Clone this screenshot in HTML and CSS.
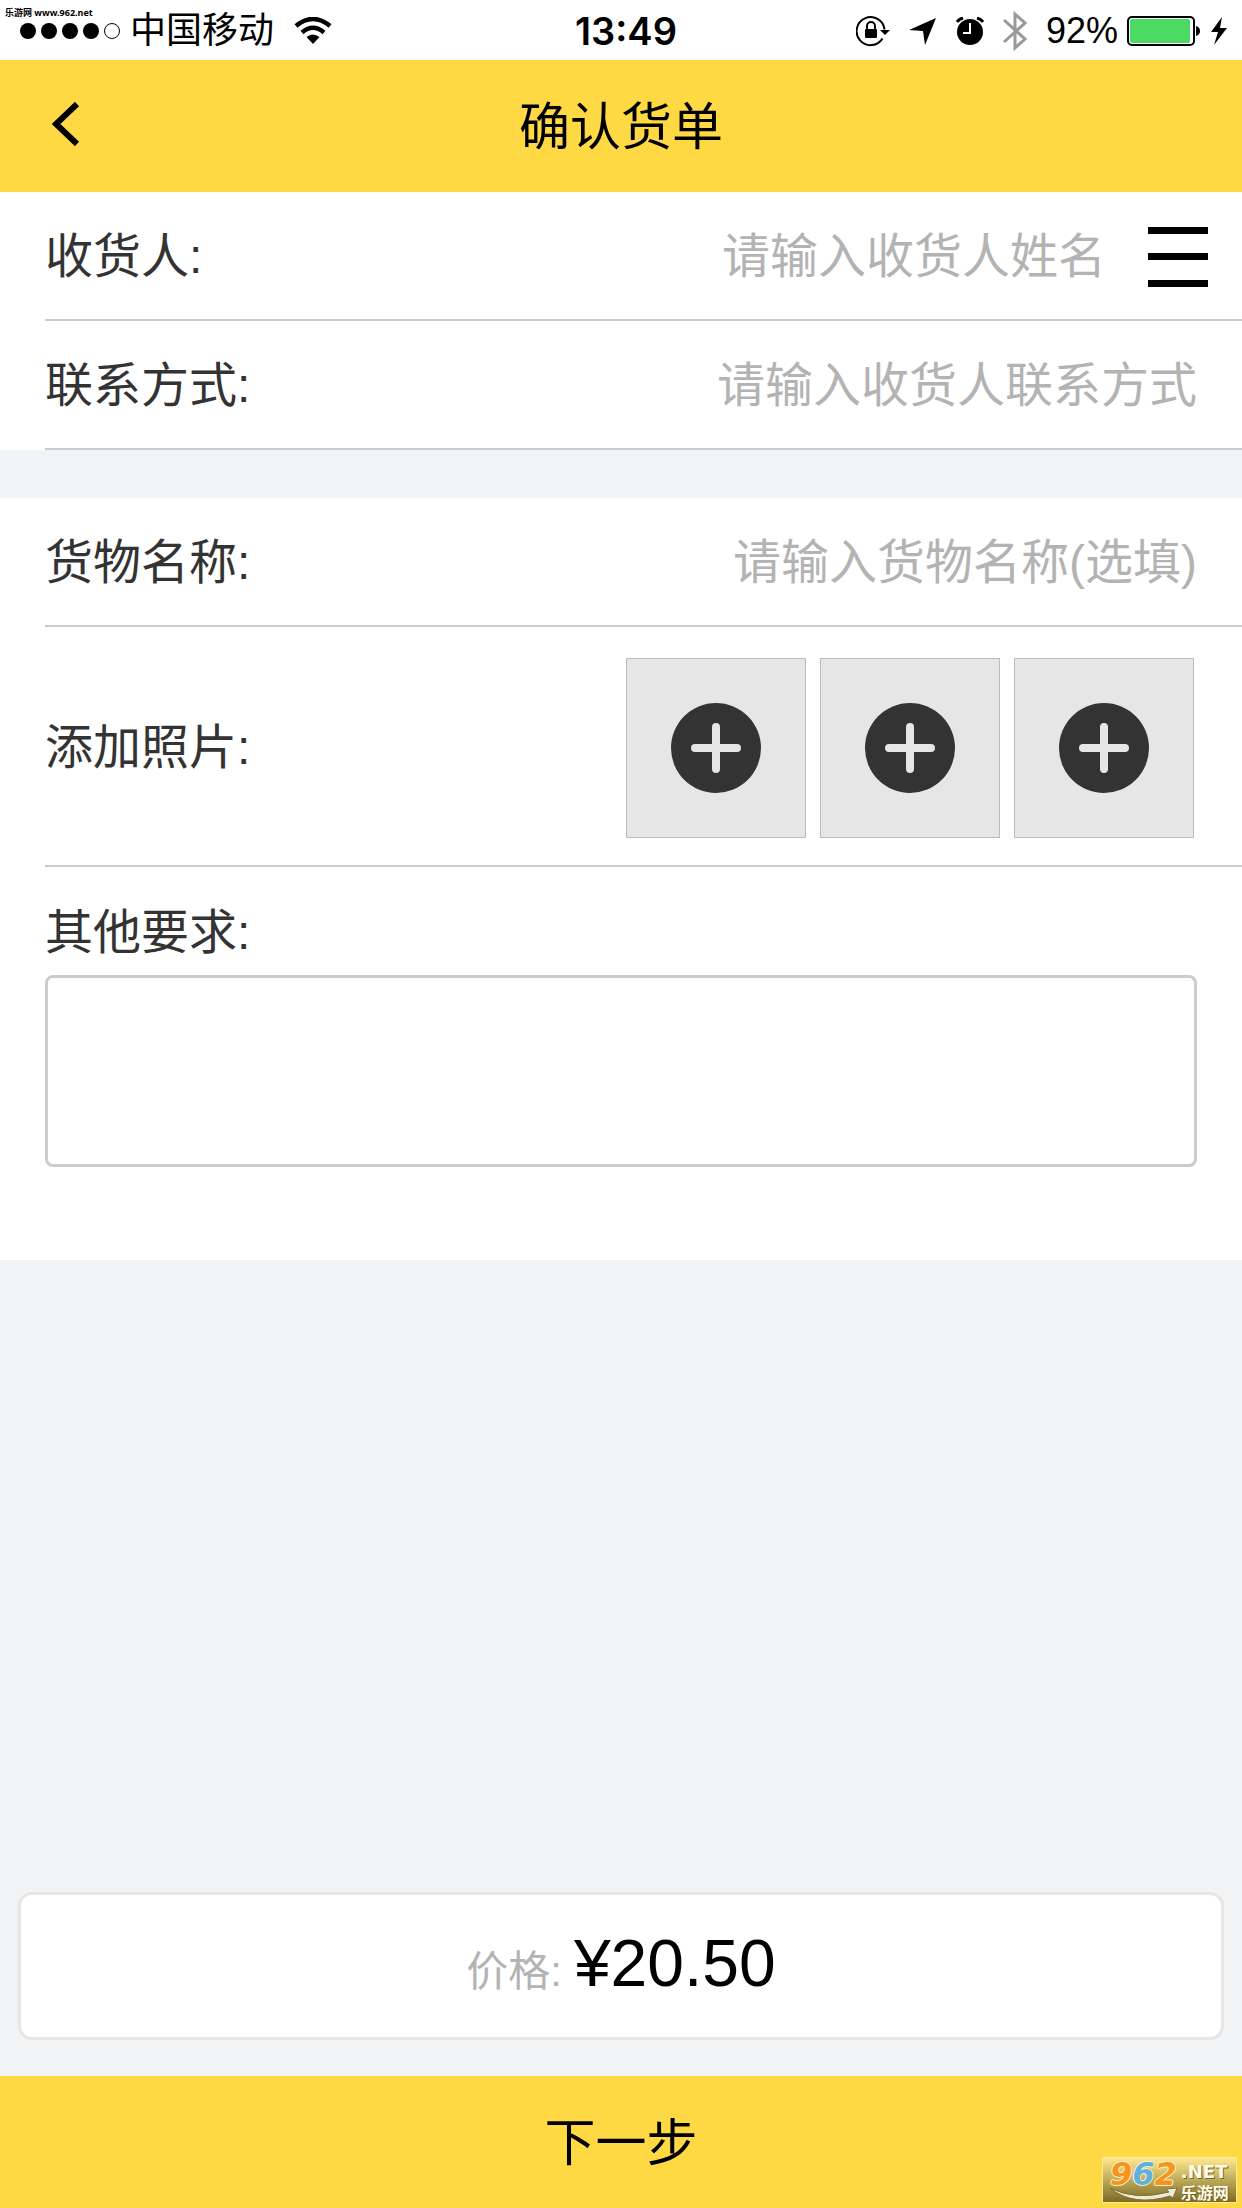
FILE: index.html
```html
<!DOCTYPE html>
<html lang="zh-CN">

<head>
	<meta charset="utf-8" />
	<meta name="viewport" content="width=device-width" />
	<title>确认货单</title>
	<link rel="stylesheet" href="styles.css">
</head>

<body>
	<div class="status">
		<div class="status-left">
			<svg class="signal" width="100" height="16" viewBox="0 0 100 16">
				<circle cx="8" cy="8" r="8" />
				<circle cx="29" cy="8" r="8" />
				<circle cx="50" cy="8" r="8" />
				<circle cx="71" cy="8" r="8" />
				<circle cx="92" cy="8" r="7.5" fill="none" stroke="#000" />
			</svg>
			<span class="carrier">中国移动</span>
			<svg class="wifi" width="38" height="28" viewBox="0 0 38 28">
				<path d="M2 9Q19-5 36 9M8 15.500Q19 6 30 15.500" fill="none" stroke="#000" stroke-width="4.500" />
				<path d="M12.500 20Q19 15 25.500 20L19 27Z" />
			</svg>
		</div>
		<time class="clock">13:49</time>
		<div class="status-right">
			<svg width="34" height="32" viewBox="0 0 34 32">
				<path d="M28.500 14.500A14 14 0 1 0 26.500 23.500" fill="none" stroke="#000" stroke-width="2" />
				<path d="M24 15H34L29 20Z" />
				<rect x="9" y="14" width="12" height="9" rx="1" />
				<path d="M11 15V11A4 4 0 0 1 19 11V15" fill="none" stroke="#000" stroke-width="2" />
			</svg>
			<svg width="28" height="28" viewBox="0 0 28 28">
				<path d="M27 1L16 28L14 14L0 13Z" />
			</svg>
			<svg width="28" height="28" viewBox="0 0 28 28">
				<circle cx="14" cy="15" r="13" />
				<path d="M1 5Q3 2 7 1M27 5Q25 2 21 1" fill="none" stroke="#000" stroke-width="3" />
				<path d="M14 6V16H7" fill="none" stroke="#fff" stroke-width="2" />
			</svg>
			<svg width="24" height="42" viewBox="0 0 24 42">
				<path d="M1 10L22 29L12 38V4L22 13L1 32" fill="none" stroke="#999" stroke-width="3" />
			</svg>
			<div class="battery">
				<span>92%</span>
				<svg width="74" height="30" viewBox="0 0 74 30">
					<rect x="1" y="1" width="66" height="28" rx="4" fill="#fff" stroke="#000" stroke-width="2" />
					<rect x="3" y="3" width="60" height="24" rx="2" fill="#4cd964" />
					<path d="M69 10Q73 11 73 15Q73 19 69 20Z" />
				</svg>
				<svg width="22" height="30" viewBox="0 0 22 30">
					<path d="M12 1L1 16H8L4 29L17 12H10Z" />
				</svg>
			</div>
		</div>
	</div>
	<div class="site-mark">乐游网 www.962.net</div>

	<header class="header">
		<button type="button" class="back" aria-label="返回">
			<svg width="28" height="44" viewBox="0 0 28 44">
				<path d="M25 2L4 22L25 42" fill="none" stroke="#000" stroke-width="6" />
			</svg>
		</button>
		<h1>确认货单</h1>
	</header>

	<form class="order">
		<section class="group">
			<div class="row with-menu">
				<label for="receiver">收货人:</label>
				<input type="text" id="receiver" placeholder="请输入收货人姓名" />
				<button type="button" class="menu" aria-label="选择收货人">
					<svg width="60" height="60" viewBox="0 0 60 60">
						<path d="M0 0H60V7H0ZM0 26H60V33H0ZM0 53H60V60H0Z" />
					</svg>
				</button>
			</div>
			<div class="row">
				<label for="contact">联系方式:</label>
				<input type="text" id="contact" placeholder="请输入收货人联系方式" />
			</div>
		</section>

		<section class="group">
			<div class="row">
				<label for="goods">货物名称:</label>
				<input type="text" id="goods" placeholder="请输入货物名称(选填)" />
			</div>
			<div class="row photos">
				<span class="photos-label">添加照片:</span>
				<button type="button" class="photo" aria-label="添加照片 1">
					<svg width="90" height="90" viewBox="0 0 90 90">
						<circle cx="45" cy="45" r="45" fill="#333" />
						<path d="M45 24V66M24 45H66" stroke="#e6e6e6" stroke-width="8" stroke-linecap="round" />
					</svg>
				</button>
				<button type="button" class="photo" aria-label="添加照片 2">
					<svg width="90" height="90" viewBox="0 0 90 90">
						<circle cx="45" cy="45" r="45" fill="#333" />
						<path d="M45 24V66M24 45H66" stroke="#e6e6e6" stroke-width="8" stroke-linecap="round" />
					</svg>
				</button>
				<button type="button" class="photo" aria-label="添加照片 3">
					<svg width="90" height="90" viewBox="0 0 90 90">
						<circle cx="45" cy="45" r="45" fill="#333" />
						<path d="M45 24V66M24 45H66" stroke="#e6e6e6" stroke-width="8" stroke-linecap="round" />
					</svg>
				</button>
			</div>
			<div class="remark">
				<label for="remark">其他要求:</label>
				<textarea id="remark"></textarea>
			</div>
		</section>

		<div class="price">
			<span class="price-label">价格:</span>
			<span class="price-value">¥20.50</span>
		</div>
		<button type="button" class="next">下一步</button>
	</form>

	<div class="logo">
		<svg class="swoosh" width="70" height="14" viewBox="0 0 70 14">
			<path d="M1 1Q26 14 60 5L57 2L68 1L64 11L61 9Q24 20 1 1Z" fill="#eeead8" stroke="#80702c" />
		</svg>
		<span class="logo-number"><i>9</i><i class="blue">6</i><i>2</i></span>
		<div class="logo-side">
			<span class="logo-net">.NET</span>
			<span class="logo-name">乐游网</span>
		</div>
	</div>
</body>

</html>
```
FILE: styles.css
```css
* {
	box-sizing: border-box;
}

body {
	display: flex;
	flex-direction: column;
	min-height: 100vh;
	margin: 0;
	background: #f2f3f5;
	color: #000;
	font-family: "Liberation Sans", "Noto Sans CJK SC", sans-serif;
	font-size: 48px;
	line-height: 72px;
}

button {
	padding: 0;
	border: 0;
	background: none;
	color: inherit;
	font: inherit;
}

svg {
	display: block;
	flex: none;
}

/* status bar */
.status {
	display: grid;
	grid-template-columns: 1fr auto 1fr;
	align-items: center;
	height: 60px;
	padding: 2px 10px 0 20px;
	background: #fff;
	font-size: 36px;
	line-height: 58px;
}

.status-left, .status-right, .battery {
	display: flex;
	align-items: center;
}

.carrier {
	margin: 0 20px 0 10px;
}

.clock {
	font-family: Inter, sans-serif;
	font-size: 38px;
	font-weight: 600;
}

.status-right {
	justify-content: flex-end;
	gap: 19px;
}

.battery {
	gap: 9px;
}

.site-mark {
	position: absolute;
	top: 5px;
	left: 5px;
	font: bold 9px/16px "Noto Sans", "Noto Sans CJK SC", sans-serif;
}

/* title bar */
.header {
	display: grid;
	grid-template-columns: 80px 1fr 80px;
	align-items: center;
	height: 132px;
	background: #ffd943;
}

.back {
	display: flex;
	justify-content: flex-end;
	padding-bottom: 4px;
}

h1 {
	margin: 0;
	padding-top: 4px;
	font-size: 51px;
	font-weight: normal;
	text-align: center;
}

/* form */
.order {
	display: flex;
	flex: 1;
	flex-direction: column;
}

.group {
	margin-bottom: 48px;
	padding-left: 45px;
	background: #fff;
	color: #333;
}

.row {
	display: flex;
	align-items: center;
	height: 129px;
	padding: 3px 45px 0 0;
	border-bottom: 2px solid #ccc;
}

.row input {
	flex: 1;
	min-width: 0;
	height: 72px;
	padding: 0;
	border: 0;
	outline: 0;
	background: none;
	font: inherit;
	text-align: right;
}

.row input::placeholder {
	color: #b3b3b3;
	opacity: 1;
}

.with-menu {
	gap: 42px;
	padding-right: 34px;
}

.menu {
	color: #000;
}

.photos {
	gap: 14px;
	height: 240px;
	padding-right: 48px;
}

.photos-label {
	flex: 1;
}

.photo {
	display: flex;
	align-items: center;
	justify-content: center;
	width: 180px;
	height: 180px;
	border: 1px solid #bbb;
	background: #e6e6e6;
}

.remark {
	display: flex;
	flex-direction: column;
	gap: 6px;
	padding: 30px 45px 93px 0;
}

.remark textarea {
	height: 192px;
	padding: 12px;
	border: 3px solid #ccc;
	border-radius: 8px;
	outline: 0;
	font: inherit;
	resize: none;
}

/* price and submit */
.price {
	display: flex;
	align-items: baseline;
	justify-content: center;
	gap: 12px;
	height: 148px;
	margin: auto 18px 36px;
	border: 3px solid #e6e6e6;
	border-radius: 14px;
	background: #fff;
	line-height: 136px;
}

.price-label {
	color: #b3b3b3;
	font-size: 42px;
}

.price-value {
	font-size: 66px;
}

.next {
	height: 132px;
	padding-top: 3px;
	background: #ffd943;
	font-size: 51px;
}

/* site logo over the corner of the submit bar */
.logo {
	position: absolute;
	right: 5px;
	bottom: 5px;
	display: flex;
	width: 135px;
	height: 46px;
	padding-left: 7px;
	border: 1px solid #ffec94;
	background: linear-gradient(#ffe98f, #7d6a24);
	white-space: nowrap;
}

.logo-number {
	color: #f7941d;
	font: bold 32px/32px "DejaVu Sans", sans-serif;
	text-shadow: 1px 0 #fff3c4, -1px 0 #fff3c4, 0 1px #fff3c4, 0 -1px #fff3c4;
}

.logo-number .blue {
	color: #5fb0df;
}

.swoosh {
	position: absolute;
	bottom: 1px;
	left: 6px;
}

.logo-side {
	display: flex;
	flex-direction: column;
	padding: 4px 0 0 4px;
	color: #fffbe8;
	text-shadow: 1px 1px #75652c;
}

.logo-net {
	font: bold 18px/20px "DejaVu Sans", sans-serif;
}

.logo-name {
	font: bold 16px/20px "Noto Sans CJK SC", sans-serif;
}
```
